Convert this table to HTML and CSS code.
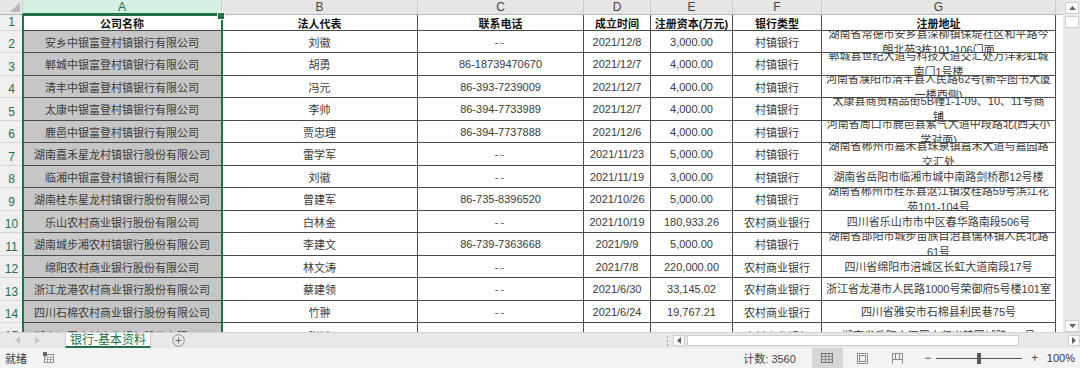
FILE: index.html
```html
<!DOCTYPE html>
<html lang="zh-CN">
<head>
<meta charset="utf-8">
<title>银行-基本资料</title>
<link rel="stylesheet" href="styles.css">
</head>
<body>
<div class="app">
  <div class="main">
    <div class="sheet">
      <div class="grid">
        <div class="h corner"><svg width="10" height="10" viewBox="0 0 10 10"><polygon points="10,0 10,10 0,10" fill="#b9b9b9"/></svg></div>
        <div class="h hsel">A</div>
        <div class="h">B</div>
        <div class="h">C</div>
        <div class="h">D</div>
        <div class="h">E</div>
        <div class="h">F</div>
        <div class="h">G</div>
        <div class="h hx"></div>

        <div class="rn">1</div>
        <div class="c a1 b">公司名称</div>
        <div class="c b">法人代表</div>
        <div class="c b">联系电话</div>
        <div class="c b">成立时间</div>
        <div class="c b">注册资本(万元)</div>
        <div class="c b">银行类型</div>
        <div class="c b">注册地址</div>
        <div class="x"></div>

        <div class="rn">2</div>
        <div class="c a">安乡中银富登村镇银行有限公司</div>
        <div class="c">刘徽</div>
        <div class="c dash">--</div>
        <div class="c">2021/12/8</div>
        <div class="c">3,000.00</div>
        <div class="c">村镇银行</div>
        <div class="c g">湖南省常德市安乡县深柳镇保堤社区和平路今<br>朗北苑3栋101-106门面</div>
        <div class="x"></div>

        <div class="rn">3</div>
        <div class="c a">郸城中银富登村镇银行有限公司</div>
        <div class="c">胡勇</div>
        <div class="c">86-18739470670</div>
        <div class="c">2021/12/7</div>
        <div class="c">4,000.00</div>
        <div class="c">村镇银行</div>
        <div class="c g">郸城县世纪大道与科技大道交汇处万洋彩虹城<br>南门1号楼</div>
        <div class="x"></div>

        <div class="rn">4</div>
        <div class="c a">清丰中银富登村镇银行有限公司</div>
        <div class="c">冯元</div>
        <div class="c">86-393-7239009</div>
        <div class="c">2021/12/7</div>
        <div class="c">4,000.00</div>
        <div class="c">村镇银行</div>
        <div class="c g">河南省濮阳市清丰县人民路62号(新华图书大厦<br>一楼西侧)</div>
        <div class="x"></div>

        <div class="rn">5</div>
        <div class="c a">太康中银富登村镇银行有限公司</div>
        <div class="c">李帅</div>
        <div class="c">86-394-7733989</div>
        <div class="c">2021/12/7</div>
        <div class="c">4,000.00</div>
        <div class="c">村镇银行</div>
        <div class="c g">太康县商贸精品街5B幢1-1-09、10、11号商<br>铺</div>
        <div class="x"></div>

        <div class="rn">6</div>
        <div class="c a">鹿邑中银富登村镇银行有限公司</div>
        <div class="c">贾忠理</div>
        <div class="c">86-394-7737888</div>
        <div class="c">2021/12/6</div>
        <div class="c">4,000.00</div>
        <div class="c">村镇银行</div>
        <div class="c g">河南省周口市鹿邑县紫气大道中段路北(西关小<br>学对面)</div>
        <div class="x"></div>

        <div class="rn">7</div>
        <div class="c a">湖南嘉禾星龙村镇银行股份有限公司</div>
        <div class="c">雷学军</div>
        <div class="c dash">--</div>
        <div class="c">2021/11/23</div>
        <div class="c">5,000.00</div>
        <div class="c">村镇银行</div>
        <div class="c g">湖南省郴州市嘉禾县珠泉镇嘉禾大道与嘉园路<br>交汇处</div>
        <div class="x"></div>

        <div class="rn">8</div>
        <div class="c a">临湘中银富登村镇银行有限公司</div>
        <div class="c">刘徽</div>
        <div class="c dash">--</div>
        <div class="c">2021/11/19</div>
        <div class="c">3,000.00</div>
        <div class="c">村镇银行</div>
        <div class="c g">湖南省岳阳市临湘市城中南路剑桥郡12号楼</div>
        <div class="x"></div>

        <div class="rn">9</div>
        <div class="c a">湖南桂东星龙村镇银行股份有限公司</div>
        <div class="c">曾建军</div>
        <div class="c">86-735-8396520</div>
        <div class="c">2021/10/26</div>
        <div class="c">5,000.00</div>
        <div class="c">村镇银行</div>
        <div class="c g">湖南省郴州市桂东县沤江镇汝桂路59号滨江花<br>苑101-104号</div>
        <div class="x"></div>

        <div class="rn">10</div>
        <div class="c a">乐山农村商业银行股份有限公司</div>
        <div class="c">白林金</div>
        <div class="c dash">--</div>
        <div class="c">2021/10/19</div>
        <div class="c">180,933.26</div>
        <div class="c">农村商业银行</div>
        <div class="c g">四川省乐山市市中区春华路南段506号</div>
        <div class="x"></div>

        <div class="rn">11</div>
        <div class="c a">湖南城步湘农村镇银行股份有限公司</div>
        <div class="c">李建文</div>
        <div class="c">86-739-7363668</div>
        <div class="c">2021/9/9</div>
        <div class="c">5,000.00</div>
        <div class="c">村镇银行</div>
        <div class="c g">湖南省邵阳市城步苗族自治县儒林镇人民北路<br>61号</div>
        <div class="x"></div>

        <div class="rn">12</div>
        <div class="c a">绵阳农村商业银行股份有限公司</div>
        <div class="c">林文涛</div>
        <div class="c dash">--</div>
        <div class="c">2021/7/8</div>
        <div class="c">220,000.00</div>
        <div class="c">农村商业银行</div>
        <div class="c g">四川省绵阳市涪城区长虹大道南段17号</div>
        <div class="x"></div>

        <div class="rn">13</div>
        <div class="c a">浙江龙港农村商业银行股份有限公司</div>
        <div class="c">蔡建领</div>
        <div class="c dash">--</div>
        <div class="c">2021/6/30</div>
        <div class="c">33,145.02</div>
        <div class="c">农村商业银行</div>
        <div class="c g">浙江省龙港市人民路1000号荣御府5号楼101室</div>
        <div class="x"></div>

        <div class="rn">14</div>
        <div class="c a">四川石棉农村商业银行股份有限公司</div>
        <div class="c">竹翀</div>
        <div class="c dash">--</div>
        <div class="c">2021/6/24</div>
        <div class="c">19,767.21</div>
        <div class="c">农村商业银行</div>
        <div class="c g">四川省雅安市石棉县利民巷75号</div>
        <div class="x"></div>

        <div class="rn">15</div>
        <div class="c a low">湖南汨罗农村商业银行股份有限公司</div>
        <div class="c low">张斌</div>
        <div class="c"></div>
        <div class="c"></div>
        <div class="c"></div>
        <div class="c low">农村商业银行</div>
        <div class="c g low">湖南省岳阳市汨罗市归义镇罗城路118号</div>
        <div class="x"></div>
      </div>
      <div class="sel"></div>
    </div>
    <div class="vscroll">
      <div class="sbtn"><svg width="7" height="4" viewBox="0 0 7 4"><polygon points="0,4 7,4 3.5,0" fill="#606060"/></svg></div>
      <div class="vthumb"></div>
      <div class="vtrack"></div>
      <div class="sbtn"><svg width="7" height="4" viewBox="0 0 7 4"><polygon points="0,0 7,0 3.5,4" fill="#606060"/></svg></div>
    </div>
  </div>

  <div class="tabs">
    <div class="navs">
      <svg width="5" height="7" viewBox="0 0 5 7"><polygon points="5,0 5,7 0,3.5" fill="#c4c4c4"/></svg>
      <svg width="5" height="7" viewBox="0 0 5 7"><polygon points="0,0 0,7 5,3.5" fill="#c4c4c4"/></svg>
    </div>
    <div class="tab">银行-基本资料</div>
    <div class="add"><svg width="13" height="13" viewBox="0 0 13 13"><circle cx="6.5" cy="6.5" r="5.8" fill="none" stroke="#8a8a8a" stroke-width="1"/><path d="M6.5 3.5v6M3.5 6.5h6" stroke="#6a6a6a" stroke-width="1"/></svg></div>
    <div class="tabspace"></div>
    <div class="splitter"><i></i><i></i><i></i></div>
    <div class="hscroll">
      <div class="hbtn"><svg width="4" height="7" viewBox="0 0 4 7"><polygon points="4,0 4,7 0,3.5" fill="#606060"/></svg></div>
      <div class="hthumb"></div>
      <div class="htrack"></div>
      <div class="hbtn"><svg width="4" height="7" viewBox="0 0 4 7"><polygon points="0,0 0,7 4,3.5" fill="#606060"/></svg></div>
    </div>
  </div>

  <div class="status">
    <span class="ready">就绪</span>
    <span class="macro"><svg width="12" height="12" viewBox="0 0 12 12"><rect x="1.5" y="2.5" width="9" height="8" fill="#fff" stroke="#8c8c8c"/><path d="M1.5 5h9M1.5 7.5h9M4.5 5v5.5M7.5 5v5.5" stroke="#a5a5a5"/><rect x="0" y="0" width="4" height="4" fill="#666"/></svg></span>
    <span class="spacer"></span>
    <span class="count">计数: 3560</span>
    <span class="view on"><svg width="12" height="10" viewBox="0 0 12 10"><rect x="0.5" y="0.5" width="11" height="9" fill="none" stroke="#707070"/><path d="M0.5 3.5h11M0.5 6.5h11M4.5 0.5v9M8 0.5v9" stroke="#8a8a8a"/></svg></span>
    <span class="view"><svg width="11" height="11" viewBox="0 0 11 11"><rect x="0.5" y="0.5" width="10" height="10" fill="none" stroke="#8a8a8a"/><rect x="2.5" y="2.5" width="6" height="6" fill="none" stroke="#8a8a8a"/></svg></span>
    <span class="view"><svg width="11" height="11" viewBox="0 0 11 11"><path d="M0.5 10.5V0.5h10v10M0.5 6.5h10M3.5 0.5v6M7.5 0.5v6" fill="none" stroke="#8a8a8a"/></svg></span>
    <span class="zm">−</span>
    <span class="slider"><span class="knob"></span></span>
    <span class="zm">+</span>
    <span class="pct">100%</span>
  </div>
</div>
</body>
</html>
```

FILE: styles.css
```css
* { box-sizing: border-box; }
html, body { margin: 0; padding: 0; }
body {
  width: 1080px;
  height: 368px;
  overflow: hidden;
  background: #fff;
  color: #3a3a3a;
  font-family: "Liberation Sans", "Noto Sans CJK SC", sans-serif;
}
.app { display: flex; flex-direction: column; height: 368px; }
.main { display: flex; height: 332px; }
.sheet { position: relative; width: 1063px; height: 332px; overflow: hidden; }
.grid {
  display: grid;
  grid-template-columns: 23px 199px 196px 166px 67px 82px 89px 234px 7px;
  grid-template-rows: 15px 16px repeat(6, 22px 23px) 22px 22px;
}
.h {
  background: #e6e6e6;
  border-right: 1px solid #cdcdcd;
  border-bottom: 1px solid #b8b8b8;
  display: flex;
  align-items: center;
  justify-content: center;
  font-size: 12px;
  color: #444;
}
.corner { justify-content: flex-end; align-items: flex-end; padding: 0 2px 2px 0; }
.hsel { background: #d3f0e0; color: #217346; border-bottom: 2px solid #217346; }
.hx { border-right: none; }
.rn {
  background: #efefef;
  border-bottom: 1px solid #d6d6d6;
  color: #217346;
  font-size: 12px;
  display: flex;
  align-items: flex-end;
  justify-content: center;
  padding-bottom: 1px;
}
.c {
  border-right: 1px solid #4a4a4a;
  border-bottom: 1px solid #4a4a4a;
  display: flex;
  align-items: center;
  justify-content: center;
  overflow: hidden;
  white-space: nowrap;
  font-size: 11px;
  color: #3a3a3a;
}
.c.b { font-weight: bold; color: #111; }
.c.a { background: #c6c6c6; }
.c.a1 { background: #fff; }
.dash { letter-spacing: 2px; color: #555; }
.g { white-space: normal; text-align: center; line-height: 16px; }
.low { align-items: flex-start; padding-top: 5px; }
.x { background: #fff; }
.sel {
  position: absolute;
  left: 22px;
  top: 14px;
  width: 201px;
  height: 330px;
  border: 2px solid #217346;
  border-bottom: none;
  pointer-events: none;
}
.sel::after {
  content: "";
  position: absolute;
  right: -4px;
  top: -4px;
  width: 6px;
  height: 6px;
  background: #217346;
  border: 1px solid #fff;
}
.vscroll {
  width: 17px;
  background: #e9e9e9;
  display: flex;
  flex-direction: column;
  padding: 2px 1px 0 2px;
}
.sbtn {
  height: 12px;
  background: #fff;
  border: 1px solid #cfcfcf;
  display: flex;
  align-items: center;
  justify-content: center;
}
.vthumb { height: 12px; background: #fff; border: 1px solid #cfcfcf; margin-top: 2px; }
.vtrack { flex: 1; }
.tabs {
  height: 16px;
  background: #e8e8e8;
  border-top: 1px solid #d2d2d2;
  display: flex;
  align-items: stretch;
}
.navs { width: 65px; display: flex; align-items: center; gap: 15px; padding-left: 15px; }
.tab {
  width: 86px;
  background: #fff;
  color: #217346;
  font-size: 12px;
  display: flex;
  align-items: center;
  justify-content: center;
  border-bottom: 2px solid #217346;
  border-left: 1px solid #d0d0d0;
  border-right: 1px solid #d0d0d0;
  line-height: 12px;
}
.add { width: 55px; display: flex; align-items: center; justify-content: center; padding-left: 0; }
.tabspace { flex: 1; }
.splitter { width: 10px; display: flex; flex-direction: column; align-items: center; justify-content: center; gap: 2px; margin-right: 1px; }
.splitter i { display: block; width: 1px; height: 2px; background: #a0a0a0; }
.hscroll { width: 407px; display: flex; align-items: center; padding: 2px 0; }
.hbtn {
  width: 12px;
  height: 11px;
  background: #fff;
  border: 1px solid #cfcfcf;
  display: flex;
  align-items: center;
  justify-content: center;
}
.hthumb { width: 332px; height: 11px; background: #fff; border: 1px solid #cfcfcf; margin-left: 2px; }
.htrack { flex: 1; }
.status {
  height: 20px;
  background: #f3f3f3;
  display: flex;
  align-items: center;
  font-size: 11px;
  color: #333;
}
.ready { margin-left: 5px; font-family: "Noto Sans CJK SC", sans-serif; }
.macro { margin-left: 16px; display: flex; }
.spacer { flex: 1; }
.count { margin-right: 16px; color: #444; }
.view { width: 31px; height: 20px; display: flex; align-items: center; justify-content: center; margin-right: 4px; }
.view.on { background: #d6d6d6; }
.zm { font-size: 12px; color: #555; width: 12px; text-align: center; margin-left: 5px; }
.slider { position: relative; width: 86px; height: 1px; background: #555; margin: 0 2px; }
.knob { position: absolute; left: 41px; top: -5px; width: 4px; height: 11px; background: #5a5a5a; }
.pct { margin-left: 6px; margin-right: 5px; color: #333; font-size: 11px; }
```
